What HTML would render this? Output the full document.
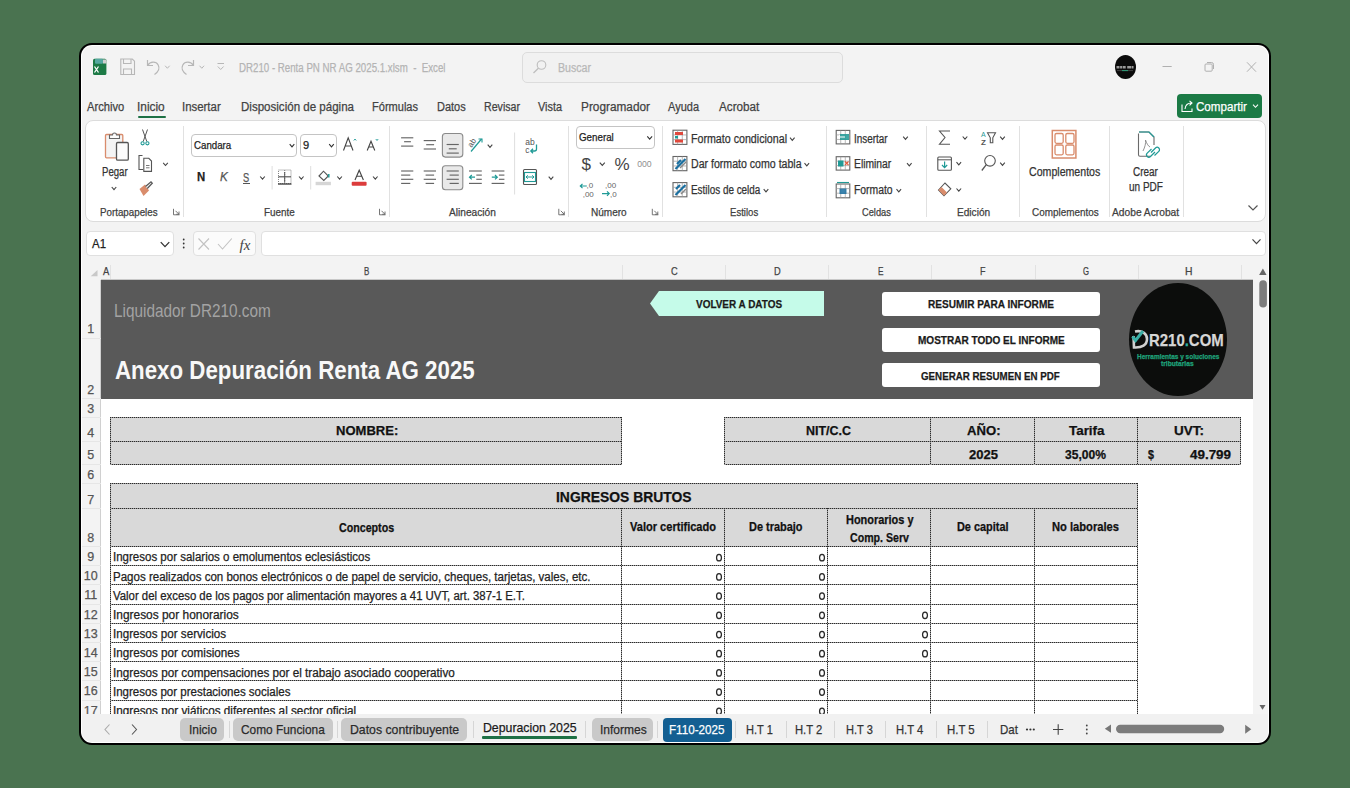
<!DOCTYPE html>
<html><head><meta charset="utf-8"><style>
html,body{margin:0;padding:0;}
body{width:1350px;height:788px;overflow:hidden;position:relative;background:#4a7350;font-family:"Liberation Sans", sans-serif;}
.a{position:absolute;box-sizing:border-box;}
.t{position:absolute;white-space:nowrap;transform-origin:0 0;-webkit-text-stroke:0.25px currentColor;}
</style></head><body>
<div class="a" style="left:79px;top:43px;width:1192px;height:702px;background:#000;border-radius:13px;"></div>
<div class="a" style="left:81px;top:45px;width:1188px;height:698px;background:#fff;border-radius:11px;"></div>
<div class="a" style="left:82px;top:46px;width:1186px;height:696px;background:#f3f3f3;border-radius:10px;"></div>
<div id="t0" class="t" style="transform:scaleX(0.8084);left:239px;top:61.84px;font-size:12px;line-height:12px;color:#b4b4b4;font-weight:400;">DR210 - Renta PN NR AG 2025.1.xlsm&nbsp; - &nbsp;Excel</div>
<div class="a" style="left:522px;top:52px;width:321px;height:31px;border:1px solid #dcdcdc;border-radius:5px;background:#f1f1f1;"></div>
<div id="t1" class="t" style="transform:scaleX(0.8833);left:558px;top:61.84px;font-size:12px;line-height:12px;color:#b8b8b8;font-weight:400;">Buscar</div>
<div id="t2" class="t" style="transform:scaleX(0.8948);left:86.7px;top:100.72px;font-size:12.5px;line-height:12.5px;color:#424242;font-weight:400;">Archivo</div>
<div id="t3" class="t" style="transform:scaleX(0.9490);left:137.3px;top:100.72px;font-size:12.5px;line-height:12.5px;color:#424242;font-weight:400;">Inicio</div>
<div id="t4" class="t" style="transform:scaleX(0.9129);left:182.3px;top:100.72px;font-size:12.5px;line-height:12.5px;color:#424242;font-weight:400;">Insertar</div>
<div id="t5" class="t" style="transform:scaleX(0.9239);left:240.7px;top:100.72px;font-size:12.5px;line-height:12.5px;color:#424242;font-weight:400;">Disposición de página</div>
<div id="t6" class="t" style="transform:scaleX(0.8830);left:372.3px;top:100.72px;font-size:12.5px;line-height:12.5px;color:#424242;font-weight:400;">Fórmulas</div>
<div id="t7" class="t" style="transform:scaleX(0.8789);left:437.3px;top:100.72px;font-size:12.5px;line-height:12.5px;color:#424242;font-weight:400;">Datos</div>
<div id="t8" class="t" style="transform:scaleX(0.8496);left:484.3px;top:100.72px;font-size:12.5px;line-height:12.5px;color:#424242;font-weight:400;">Revisar</div>
<div id="t9" class="t" style="transform:scaleX(0.8703);left:538.3px;top:100.72px;font-size:12.5px;line-height:12.5px;color:#424242;font-weight:400;">Vista</div>
<div id="t10" class="t" style="transform:scaleX(0.9458);left:581px;top:100.72px;font-size:12.5px;line-height:12.5px;color:#424242;font-weight:400;">Programador</div>
<div id="t11" class="t" style="transform:scaleX(0.8802);left:668.3px;top:100.72px;font-size:12.5px;line-height:12.5px;color:#424242;font-weight:400;">Ayuda</div>
<div id="t12" class="t" style="transform:scaleX(0.9352);left:719px;top:100.72px;font-size:12.5px;line-height:12.5px;color:#424242;font-weight:400;">Acrobat</div>
<div class="a" style="left:137.5px;top:115.5px;width:28.0px;height:2.5px;background:#1e7145;border-radius:1px;"></div>
<div class="a" style="left:1177px;top:94px;width:85px;height:24px;background:#1b7a45;border-radius:4px;"></div>
<div id="t13" class="t" style="transform:scaleX(0.9276);left:1195.8px;top:100.72px;font-size:12.5px;line-height:12.5px;color:#ffffff;font-weight:400;">Compartir</div>
<div class="a" style="left:1115px;top:55px;width:21px;height:24px;border-radius:50%;background:#0b0b0b;"></div>
<div class="a" style="left:84.5px;top:120px;width:1181.0px;height:102px;background:#ffffff;border:1px solid #dcdcdc;border-radius:8px;"></div>
<div id="t14" class="t" style="transform:scaleX(0.8885);left:100.1px;top:206.99px;font-size:11px;line-height:11px;color:#404040;font-weight:400;">Portapapeles</div>
<div id="t15" class="t" style="transform:scaleX(0.8993);left:264.4px;top:206.99px;font-size:11px;line-height:11px;color:#404040;font-weight:400;">Fuente</div>
<div id="t16" class="t" style="transform:scaleX(0.9239);left:448.5px;top:206.99px;font-size:11px;line-height:11px;color:#404040;font-weight:400;">Alineación</div>
<div id="t17" class="t" style="transform:scaleX(0.9125);left:590.8px;top:206.99px;font-size:11px;line-height:11px;color:#404040;font-weight:400;">Número</div>
<div id="t18" class="t" style="transform:scaleX(0.8702);left:729.9px;top:206.99px;font-size:11px;line-height:11px;color:#404040;font-weight:400;">Estilos</div>
<div id="t19" class="t" style="transform:scaleX(0.8409);left:861.9px;top:206.99px;font-size:11px;line-height:11px;color:#404040;font-weight:400;">Celdas</div>
<div id="t20" class="t" style="transform:scaleX(0.9175);left:956.8px;top:206.99px;font-size:11px;line-height:11px;color:#404040;font-weight:400;">Edición</div>
<div id="t21" class="t" style="transform:scaleX(0.9015);left:1031.6px;top:206.99px;font-size:11px;line-height:11px;color:#404040;font-weight:400;">Complementos</div>
<div id="t22" class="t" style="transform:scaleX(0.9297);left:1112.1px;top:206.99px;font-size:11px;line-height:11px;color:#404040;font-weight:400;">Adobe Acrobat</div>
<div class="a" style="left:183px;top:126px;width:1px;height:91px;background:#e1e1e1;"></div>
<div class="a" style="left:389.3px;top:126px;width:1.0px;height:91px;background:#e1e1e1;"></div>
<div class="a" style="left:568.4px;top:126px;width:1.0px;height:91px;background:#e1e1e1;"></div>
<div class="a" style="left:661.8px;top:126px;width:1.0px;height:91px;background:#e1e1e1;"></div>
<div class="a" style="left:825.9px;top:126px;width:1.0px;height:91px;background:#e1e1e1;"></div>
<div class="a" style="left:926.1px;top:126px;width:1.0px;height:91px;background:#e1e1e1;"></div>
<div class="a" style="left:1019.4px;top:126px;width:1.0px;height:91px;background:#e1e1e1;"></div>
<div class="a" style="left:1109.1px;top:126px;width:1.0px;height:91px;background:#e1e1e1;"></div>
<div class="a" style="left:1182.8px;top:126px;width:1.0px;height:91px;background:#e1e1e1;"></div>
<div id="t23" class="t" style="transform:scaleX(0.7992);left:101.8px;top:166.14px;font-size:12px;line-height:12px;color:#333;font-weight:400;">Pegar</div>
<div class="a" style="left:190.7px;top:133.5px;width:106.60000000000002px;height:23.69999999999999px;border:1px solid #c4c4c4;border-radius:4px;background:#fff;"></div>
<div id="t24" class="t" style="transform:scaleX(0.8431);left:193.8px;top:139.67px;font-size:11.5px;line-height:11.5px;color:#222;font-weight:400;">Candara</div>
<div class="a" style="left:300.4px;top:133.5px;width:36.80000000000001px;height:23.69999999999999px;border:1px solid #c4c4c4;border-radius:4px;background:#fff;"></div>
<div id="t25" class="t" style="transform:scaleX(0.9678);left:302.8px;top:139.67px;font-size:11.5px;line-height:11.5px;color:#222;font-weight:400;">9</div>
<div class="a" style="left:576.3px;top:125.8px;width:78.80000000000007px;height:23.000000000000014px;border:1px solid #c4c4c4;border-radius:4px;background:#fff;"></div>
<div id="t26" class="t" style="transform:scaleX(0.8891);left:578.8px;top:132.29px;font-size:11px;line-height:11px;color:#222;font-weight:400;">General</div>
<div id="t27" class="t" style="transform:scaleX(0.8884);left:690.7px;top:132.84px;font-size:12px;line-height:12px;color:#333;font-weight:400;">Formato condicional</div>
<div id="t28" class="t" style="transform:scaleX(0.8820);left:690.7px;top:158.14px;font-size:12px;line-height:12px;color:#333;font-weight:400;">Dar formato como tabla</div>
<div id="t29" class="t" style="transform:scaleX(0.8245);left:690.7px;top:184.34px;font-size:12px;line-height:12px;color:#333;font-weight:400;">Estilos de celda</div>
<div id="t30" class="t" style="transform:scaleX(0.8258);left:853.9px;top:132.84px;font-size:12px;line-height:12px;color:#333;font-weight:400;">Insertar</div>
<div id="t31" class="t" style="transform:scaleX(0.8606);left:853.9px;top:158.14px;font-size:12px;line-height:12px;color:#333;font-weight:400;">Eliminar</div>
<div id="t32" class="t" style="transform:scaleX(0.8638);left:853.9px;top:184.34px;font-size:12px;line-height:12px;color:#333;font-weight:400;">Formato</div>
<div id="t33" class="t" style="transform:scaleX(0.8835);left:1028.6px;top:165.74px;font-size:12px;line-height:12px;color:#333;font-weight:400;">Complementos</div>
<div id="t34" class="t" style="transform:scaleX(0.8296);left:1133.3px;top:165.74px;font-size:12px;line-height:12px;color:#333;font-weight:400;">Crear</div>
<div id="t35" class="t" style="transform:scaleX(0.8332);left:1128.8px;top:181.44px;font-size:12px;line-height:12px;color:#333;font-weight:400;">un PDF</div>
<div id="t36" class="t" style="transform:scaleX(0.9080);left:196.7px;top:171.12px;font-size:12.5px;line-height:12.5px;color:#222;font-weight:700;">N</div>
<div id="t37" class="t" style="transform:scaleX(0.9348);left:219.5px;top:171.12px;font-size:12.5px;line-height:12.5px;color:#555;font-weight:400;font-style:italic;">K</div>
<div id="t38" class="t" style="transform:scaleX(0.7735);left:243.3px;top:171.54px;font-size:12px;line-height:12px;color:#555;font-weight:400;">S</div>
<div class="a" style="left:243px;top:182.7px;width:7px;height:1.1000000000000227px;background:#555;"></div>
<div class="a" style="left:86px;top:230.5px;width:88px;height:25.5px;border:1px solid #e0e0e0;border-radius:4px;background:#fff;"></div>
<div id="t39" class="t" style="transform:scaleX(0.9532);left:92px;top:237.94px;font-size:12px;line-height:12px;color:#222;font-weight:400;">A1</div>
<div class="a" style="left:193px;top:230.5px;width:63px;height:25.5px;border:1px solid #e0e0e0;border-radius:4px;background:#fbfbfb;"></div>
<div class="a" style="left:261px;top:230.5px;width:1004.5px;height:25.5px;border:1px solid #e0e0e0;border-radius:4px;background:#fff;"></div>
<div class="a" style="left:101px;top:259px;width:1152px;height:21px;background:#f3f3f3;border-bottom:1px solid #c8c8c8;"></div>
<div class="a" style="left:110px;top:265px;width:1px;height:14px;background:#e2e2e2;"></div>
<div class="a" style="left:621.5px;top:265px;width:1.0px;height:14px;background:#e2e2e2;"></div>
<div class="a" style="left:724.5px;top:265px;width:1.0px;height:14px;background:#e2e2e2;"></div>
<div class="a" style="left:828px;top:265px;width:1px;height:14px;background:#e2e2e2;"></div>
<div class="a" style="left:931px;top:265px;width:1px;height:14px;background:#e2e2e2;"></div>
<div class="a" style="left:1034.5px;top:265px;width:1.0px;height:14px;background:#e2e2e2;"></div>
<div class="a" style="left:1137.5px;top:265px;width:1.0px;height:14px;background:#e2e2e2;"></div>
<div class="a" style="left:1241px;top:265px;width:1px;height:14px;background:#e2e2e2;"></div>
<div id="t40" class="t" style="transform:scaleX(0.8579);left:103px;top:266.29px;font-size:11px;line-height:11px;color:#444;font-weight:400;">A</div>
<div id="t41" class="t" style="transform:scaleX(0.7217);left:364px;top:266.29px;font-size:11px;line-height:11px;color:#444;font-weight:400;">B</div>
<div id="t42" class="t" style="transform:scaleX(0.8424);left:670.5px;top:266.29px;font-size:11px;line-height:11px;color:#444;font-weight:400;">C</div>
<div id="t43" class="t" style="transform:scaleX(0.8424);left:773.8px;top:266.29px;font-size:11px;line-height:11px;color:#444;font-weight:400;">D</div>
<div id="t44" class="t" style="transform:scaleX(0.7489);left:877.5px;top:266.29px;font-size:11px;line-height:11px;color:#444;font-weight:400;">E</div>
<div id="t45" class="t" style="transform:scaleX(0.8167);left:980px;top:266.29px;font-size:11px;line-height:11px;color:#444;font-weight:400;">F</div>
<div id="t46" class="t" style="transform:scaleX(0.7007);left:1082.5px;top:266.29px;font-size:11px;line-height:11px;color:#444;font-weight:400;">G</div>
<div id="t47" class="t" style="transform:scaleX(0.9430);left:1185px;top:266.29px;font-size:11px;line-height:11px;color:#444;font-weight:400;">H</div>
<div class="a" style="left:82px;top:280px;width:19px;height:434px;background:#f3f3f3;border-right:1px solid #d0d0d0;"></div>
<div class="a" style="left:101px;top:280px;width:1152px;height:434px;background:#fff;"></div>
<div class="a" style="left:101px;top:280.4px;width:1152px;height:118.30000000000001px;background:#595959;"></div>
<div id="t48" class="t" style="transform:scaleX(0.8244);left:114px;top:301.76px;font-size:18.6px;line-height:18.6px;color:#a3a3a3;font-weight:400;-webkit-text-stroke:0;">Liquidador DR210.com</div>
<div id="t49" class="t" style="transform:scaleX(0.8574);left:115.3px;top:357.29px;font-size:26px;line-height:26px;color:#f8f8f8;font-weight:700;-webkit-text-stroke:0;">Anexo Depuración Renta AG 2025</div>
<svg class="a" style="left:650px;top:291px" width="175" height="25"><polygon points="0,12.5 9,0 174,0 174,25 9,25" fill="#c5fbe9"/></svg>
<div id="t50" class="t" style="transform:scaleX(0.8656);left:696.4px;top:299.17px;font-size:11.5px;line-height:11.5px;color:#1a1a1a;font-weight:700;">VOLVER A DATOS</div>
<div class="a" style="left:882.2px;top:291.5px;width:217.79999999999995px;height:24.399999999999977px;background:#fff;border-radius:3px;"></div>
<div id="t51" class="t" style="transform:scaleX(0.8765);left:927.9px;top:299.17px;font-size:11.5px;line-height:11.5px;color:#1a1a1a;font-weight:700;">RESUMIR PARA INFORME</div>
<div class="a" style="left:882.2px;top:327.7px;width:217.79999999999995px;height:24.0px;background:#fff;border-radius:3px;"></div>
<div id="t52" class="t" style="transform:scaleX(0.8725);left:917.5px;top:335.37px;font-size:11.5px;line-height:11.5px;color:#1a1a1a;font-weight:700;">MOSTRAR TODO EL INFORME</div>
<div class="a" style="left:882.2px;top:363.4px;width:217.79999999999995px;height:23.600000000000023px;background:#fff;border-radius:3px;"></div>
<div id="t53" class="t" style="transform:scaleX(0.8479);left:921.3px;top:371.07px;font-size:11.5px;line-height:11.5px;color:#1a1a1a;font-weight:700;">GENERAR RESUMEN EN PDF</div>
<div class="a" style="left:1128.5px;top:282.7px;width:98px;height:113px;border-radius:50%;background:#0c0d0c;"></div>
<div id="t54" class="t" style="transform:scaleX(0.8783);left:1149.1px;top:332.01px;font-size:17px;line-height:17px;color:#d6d6d6;font-weight:700;">R210<span style="color:#2bb0a0">.</span>COM</div>
<div id="t55" class="t" style="transform:scaleX(0.9249);left:1136.7px;top:352.87px;font-size:7px;line-height:7px;color:#1fa27a;font-weight:700;">Herramientas y soluciones</div>
<div id="t56" class="t" style="transform:scaleX(0.9523);left:1161.2px;top:359.87px;font-size:7px;line-height:7px;color:#1fa27a;font-weight:700;">tributarias</div>
<svg class="a" style="left:1130px;top:328px" width="20" height="22" viewBox="0 0 20 22"><path d="M5 3.5 C12 2 17 5.5 17 11 C17 17 12 20 4 19.5 L3.5 8" stroke="#d0d0d0" stroke-width="2.6" fill="none"/><path d="M2.5 8.5 L5.5 12.5 L13 3" stroke="#3aaea6" stroke-width="3" fill="none"/></svg>
<div class="a" style="left:82px;top:337.5px;width:19px;height:1.0px;background:#e6e6e6;"></div>
<div class="t" style="left:70.8px;width:40px;text-align:center;top:323.22px;font-size:12.5px;line-height:12.5px;color:#555;">1</div>
<div class="a" style="left:82px;top:398.2px;width:19px;height:1.0px;background:#e6e6e6;"></div>
<div class="t" style="left:70.8px;width:40px;text-align:center;top:383.92px;font-size:12.5px;line-height:12.5px;color:#555;">2</div>
<div class="a" style="left:82px;top:417.2px;width:19px;height:1.0px;background:#e6e6e6;"></div>
<div class="t" style="left:70.8px;width:40px;text-align:center;top:402.92px;font-size:12.5px;line-height:12.5px;color:#555;">3</div>
<div class="a" style="left:82px;top:440.8px;width:19px;height:1.0px;background:#e6e6e6;"></div>
<div class="t" style="left:70.8px;width:40px;text-align:center;top:426.52px;font-size:12.5px;line-height:12.5px;color:#555;">4</div>
<div class="a" style="left:82px;top:463.5px;width:19px;height:1.0px;background:#e6e6e6;"></div>
<div class="t" style="left:70.8px;width:40px;text-align:center;top:449.22px;font-size:12.5px;line-height:12.5px;color:#555;">5</div>
<div class="a" style="left:82px;top:483.0px;width:19px;height:1.0px;background:#e6e6e6;"></div>
<div class="t" style="left:70.8px;width:40px;text-align:center;top:468.72px;font-size:12.5px;line-height:12.5px;color:#555;">6</div>
<div class="a" style="left:82px;top:507.8px;width:19px;height:1.0px;background:#e6e6e6;"></div>
<div class="t" style="left:70.8px;width:40px;text-align:center;top:493.52px;font-size:12.5px;line-height:12.5px;color:#555;">7</div>
<div class="a" style="left:82px;top:546.0px;width:19px;height:1.0px;background:#e6e6e6;"></div>
<div class="t" style="left:70.8px;width:40px;text-align:center;top:531.72px;font-size:12.5px;line-height:12.5px;color:#555;">8</div>
<div class="a" style="left:82px;top:565.2px;width:19px;height:1.0px;background:#e6e6e6;"></div>
<div class="t" style="left:70.8px;width:40px;text-align:center;top:550.92px;font-size:12.5px;line-height:12.5px;color:#555;">9</div>
<div class="a" style="left:82px;top:584.4000000000001px;width:19px;height:1.0px;background:#e6e6e6;"></div>
<div class="t" style="left:70.8px;width:40px;text-align:center;top:570.12px;font-size:12.5px;line-height:12.5px;color:#555;">10</div>
<div class="a" style="left:82px;top:603.6000000000001px;width:19px;height:1.0px;background:#e6e6e6;"></div>
<div class="t" style="left:70.8px;width:40px;text-align:center;top:589.32px;font-size:12.5px;line-height:12.5px;color:#555;">11</div>
<div class="a" style="left:82px;top:622.8000000000002px;width:19px;height:1.0px;background:#e6e6e6;"></div>
<div class="t" style="left:70.8px;width:40px;text-align:center;top:608.52px;font-size:12.5px;line-height:12.5px;color:#555;">12</div>
<div class="a" style="left:82px;top:642.0000000000002px;width:19px;height:1.0px;background:#e6e6e6;"></div>
<div class="t" style="left:70.8px;width:40px;text-align:center;top:627.72px;font-size:12.5px;line-height:12.5px;color:#555;">13</div>
<div class="a" style="left:82px;top:661.2000000000003px;width:19px;height:1.0px;background:#e6e6e6;"></div>
<div class="t" style="left:70.8px;width:40px;text-align:center;top:646.92px;font-size:12.5px;line-height:12.5px;color:#555;">14</div>
<div class="a" style="left:82px;top:680.4000000000003px;width:19px;height:1.0px;background:#e6e6e6;"></div>
<div class="t" style="left:70.8px;width:40px;text-align:center;top:666.12px;font-size:12.5px;line-height:12.5px;color:#555;">15</div>
<div class="a" style="left:82px;top:699.6000000000004px;width:19px;height:1.0px;background:#e6e6e6;"></div>
<div class="t" style="left:70.8px;width:40px;text-align:center;top:685.32px;font-size:12.5px;line-height:12.5px;color:#555;">16</div>
<div class="a" style="left:82px;top:718.8000000000004px;width:19px;height:1.0px;background:#e6e6e6;"></div>
<div class="t" style="left:70.8px;width:40px;text-align:center;top:704.52px;font-size:12.5px;line-height:12.5px;color:#555;">17</div>
<div class="a" style="left:110px;top:417px;width:512px;height:48px;background:#d9d9d9;"></div>
<div class="a" style="left:724px;top:417px;width:517px;height:48px;background:#d9d9d9;"></div>
<div class="a" style="left:110px;top:417px;width:512px;height:1px;background:repeating-linear-gradient(90deg,#2a2a2a 0 1px,#9a9a9a 1px 2px);"></div>
<div class="a" style="left:724px;top:417px;width:517px;height:1px;background:repeating-linear-gradient(90deg,#2a2a2a 0 1px,#9a9a9a 1px 2px);"></div>
<div class="a" style="left:110px;top:441px;width:512px;height:1px;background:repeating-linear-gradient(90deg,#2a2a2a 0 1px,#9a9a9a 1px 2px);"></div>
<div class="a" style="left:724px;top:441px;width:517px;height:1px;background:repeating-linear-gradient(90deg,#2a2a2a 0 1px,#9a9a9a 1px 2px);"></div>
<div class="a" style="left:110px;top:464px;width:512px;height:1px;background:repeating-linear-gradient(90deg,#2a2a2a 0 1px,#9a9a9a 1px 2px);"></div>
<div class="a" style="left:724px;top:464px;width:517px;height:1px;background:repeating-linear-gradient(90deg,#2a2a2a 0 1px,#9a9a9a 1px 2px);"></div>
<div class="a" style="left:110px;top:417px;width:1px;height:48px;background:repeating-linear-gradient(180deg,#2a2a2a 0 1px,#9a9a9a 1px 2px);"></div>
<div class="a" style="left:621px;top:417px;width:1px;height:48px;background:repeating-linear-gradient(180deg,#2a2a2a 0 1px,#9a9a9a 1px 2px);"></div>
<div class="a" style="left:724px;top:417px;width:1px;height:48px;background:repeating-linear-gradient(180deg,#2a2a2a 0 1px,#9a9a9a 1px 2px);"></div>
<div class="a" style="left:930px;top:417px;width:1px;height:48px;background:repeating-linear-gradient(180deg,#2a2a2a 0 1px,#9a9a9a 1px 2px);"></div>
<div class="a" style="left:1034px;top:417px;width:1px;height:48px;background:repeating-linear-gradient(180deg,#2a2a2a 0 1px,#9a9a9a 1px 2px);"></div>
<div class="a" style="left:1137px;top:417px;width:1px;height:48px;background:repeating-linear-gradient(180deg,#2a2a2a 0 1px,#9a9a9a 1px 2px);"></div>
<div class="a" style="left:1240px;top:417px;width:1px;height:48px;background:repeating-linear-gradient(180deg,#2a2a2a 0 1px,#9a9a9a 1px 2px);"></div>
<div id="t57" class="t" style="transform:scaleX(1.0031);left:335.6px;top:424.00px;font-size:13px;line-height:13px;color:#111;font-weight:700;">NOMBRE:</div>
<div id="t58" class="t" style="transform:scaleX(0.9584);left:806px;top:424.00px;font-size:13px;line-height:13px;color:#111;font-weight:700;">NIT/C.C</div>
<div id="t59" class="t" style="transform:scaleX(1.0085);left:966.5px;top:424.00px;font-size:13px;line-height:13px;color:#111;font-weight:700;">AÑO:</div>
<div id="t60" class="t" style="transform:scaleX(1.0309);left:1068.5px;top:424.00px;font-size:13px;line-height:13px;color:#111;font-weight:700;">Tarifa</div>
<div id="t61" class="t" style="transform:scaleX(1.0384);left:1174px;top:424.00px;font-size:13px;line-height:13px;color:#111;font-weight:700;">UVT:</div>
<div id="t62" class="t" style="transform:scaleX(1.0860);left:968.5px;top:448.84px;font-size:12px;line-height:12px;color:#111;font-weight:700;">2025</div>
<div id="t63" class="t" style="transform:scaleX(1.0073);left:1065px;top:448.84px;font-size:12px;line-height:12px;color:#111;font-weight:700;">35,00%</div>
<div id="t64" class="t" style="transform:scaleX(0.8972);left:1147.5px;top:448.84px;font-size:12px;line-height:12px;color:#111;font-weight:700;">$</div>
<div id="t65" class="t" style="transform:scaleX(1.1171);left:1190px;top:448.84px;font-size:12px;line-height:12px;color:#111;font-weight:700;">49.799</div>
<div class="a" style="left:110px;top:483px;width:1028px;height:63px;background:#d9d9d9;"></div>
<div class="a" style="left:110px;top:483px;width:1028px;height:1px;background:repeating-linear-gradient(90deg,#2a2a2a 0 1px,#9a9a9a 1px 2px);"></div>
<div class="a" style="left:110px;top:508px;width:1028px;height:1px;background:repeating-linear-gradient(90deg,#2a2a2a 0 1px,#9a9a9a 1px 2px);"></div>
<div class="a" style="left:110px;top:546px;width:1028px;height:1px;background:repeating-linear-gradient(90deg,#2a2a2a 0 1px,#9a9a9a 1px 2px);"></div>
<div class="a" style="left:110px;top:565px;width:1028px;height:1px;background:repeating-linear-gradient(90deg,#2a2a2a 0 1px,#9a9a9a 1px 2px);"></div>
<div class="a" style="left:110px;top:584px;width:1028px;height:1px;background:repeating-linear-gradient(90deg,#2a2a2a 0 1px,#9a9a9a 1px 2px);"></div>
<div class="a" style="left:110px;top:604px;width:1028px;height:1px;background:repeating-linear-gradient(90deg,#2a2a2a 0 1px,#9a9a9a 1px 2px);"></div>
<div class="a" style="left:110px;top:623px;width:1028px;height:1px;background:repeating-linear-gradient(90deg,#2a2a2a 0 1px,#9a9a9a 1px 2px);"></div>
<div class="a" style="left:110px;top:642px;width:1028px;height:1px;background:repeating-linear-gradient(90deg,#2a2a2a 0 1px,#9a9a9a 1px 2px);"></div>
<div class="a" style="left:110px;top:661px;width:1028px;height:1px;background:repeating-linear-gradient(90deg,#2a2a2a 0 1px,#9a9a9a 1px 2px);"></div>
<div class="a" style="left:110px;top:680px;width:1028px;height:1px;background:repeating-linear-gradient(90deg,#2a2a2a 0 1px,#9a9a9a 1px 2px);"></div>
<div class="a" style="left:110px;top:700px;width:1028px;height:1px;background:repeating-linear-gradient(90deg,#2a2a2a 0 1px,#9a9a9a 1px 2px);"></div>
<div class="a" style="left:110px;top:483px;width:1px;height:231px;background:repeating-linear-gradient(180deg,#2a2a2a 0 1px,#9a9a9a 1px 2px);"></div>
<div class="a" style="left:1137px;top:483px;width:1px;height:231px;background:repeating-linear-gradient(180deg,#2a2a2a 0 1px,#9a9a9a 1px 2px);"></div>
<div class="a" style="left:621px;top:508px;width:1px;height:206px;background:repeating-linear-gradient(180deg,#2a2a2a 0 1px,#9a9a9a 1px 2px);"></div>
<div class="a" style="left:724px;top:508px;width:1px;height:206px;background:repeating-linear-gradient(180deg,#2a2a2a 0 1px,#9a9a9a 1px 2px);"></div>
<div class="a" style="left:827px;top:508px;width:1px;height:206px;background:repeating-linear-gradient(180deg,#2a2a2a 0 1px,#9a9a9a 1px 2px);"></div>
<div class="a" style="left:930px;top:508px;width:1px;height:206px;background:repeating-linear-gradient(180deg,#2a2a2a 0 1px,#9a9a9a 1px 2px);"></div>
<div class="a" style="left:1034px;top:508px;width:1px;height:206px;background:repeating-linear-gradient(180deg,#2a2a2a 0 1px,#9a9a9a 1px 2px);"></div>
<div id="t66" class="t" style="transform:scaleX(0.9254);left:556px;top:488.80px;font-size:15px;line-height:15px;color:#111;font-weight:700;">INGRESOS BRUTOS</div>
<div id="t67" class="t" style="transform:scaleX(0.8885);left:338.6px;top:522.04px;font-size:12px;line-height:12px;color:#111;font-weight:700;">Conceptos</div>
<div id="t68" class="t" style="transform:scaleX(0.9210);left:630px;top:520.84px;font-size:12px;line-height:12px;color:#111;font-weight:700;">Valor certificado</div>
<div id="t69" class="t" style="transform:scaleX(0.9116);left:749px;top:520.84px;font-size:12px;line-height:12px;color:#111;font-weight:700;">De trabajo</div>
<div id="t70" class="t" style="transform:scaleX(0.9120);left:846px;top:513.84px;font-size:12px;line-height:12px;color:#111;font-weight:700;">Honorarios y</div>
<div id="t71" class="t" style="transform:scaleX(0.8847);left:850px;top:532.34px;font-size:12px;line-height:12px;color:#111;font-weight:700;">Comp. Serv</div>
<div id="t72" class="t" style="transform:scaleX(0.9082);left:956.5px;top:520.84px;font-size:12px;line-height:12px;color:#111;font-weight:700;">De capital</div>
<div id="t73" class="t" style="transform:scaleX(0.9302);left:1051.5px;top:520.84px;font-size:12px;line-height:12px;color:#111;font-weight:700;">No laborales</div>
<div id="t74" class="t" style="transform:scaleX(0.9593);left:113.2px;top:551.34px;font-size:12px;line-height:12px;color:#222;font-weight:400;">Ingresos por salarios o emolumentos eclesiásticos</div>
<svg class="a" style="left:0;top:0" width="1350" height="788"><ellipse cx="719" cy="557.70" rx="2.45" ry="3.25" stroke="#2a2a2a" stroke-width="1.25" fill="none"/><ellipse cx="822" cy="557.70" rx="2.45" ry="3.25" stroke="#2a2a2a" stroke-width="1.25" fill="none"/></svg>
<div id="t75" class="t" style="transform:scaleX(0.9608);left:113.2px;top:570.54px;font-size:12px;line-height:12px;color:#222;font-weight:400;">Pagos realizados con bonos electrónicos o de papel de servicio, cheques, tarjetas, vales, etc.</div>
<svg class="a" style="left:0;top:0" width="1350" height="788"><ellipse cx="719" cy="576.90" rx="2.45" ry="3.25" stroke="#2a2a2a" stroke-width="1.25" fill="none"/><ellipse cx="822" cy="576.90" rx="2.45" ry="3.25" stroke="#2a2a2a" stroke-width="1.25" fill="none"/></svg>
<div id="t76" class="t" style="transform:scaleX(0.9474);left:113.2px;top:589.74px;font-size:12px;line-height:12px;color:#222;font-weight:400;">Valor del exceso de los pagos por alimentación mayores a 41 UVT, art. 387-1 E.T.</div>
<svg class="a" style="left:0;top:0" width="1350" height="788"><ellipse cx="719" cy="596.10" rx="2.45" ry="3.25" stroke="#2a2a2a" stroke-width="1.25" fill="none"/><ellipse cx="822" cy="596.10" rx="2.45" ry="3.25" stroke="#2a2a2a" stroke-width="1.25" fill="none"/></svg>
<div id="t77" class="t" style="transform:scaleX(0.9925);left:113.2px;top:608.94px;font-size:12px;line-height:12px;color:#222;font-weight:400;">Ingresos por honorarios</div>
<svg class="a" style="left:0;top:0" width="1350" height="788"><ellipse cx="719" cy="615.30" rx="2.45" ry="3.25" stroke="#2a2a2a" stroke-width="1.25" fill="none"/><ellipse cx="822" cy="615.30" rx="2.45" ry="3.25" stroke="#2a2a2a" stroke-width="1.25" fill="none"/><ellipse cx="925" cy="615.30" rx="2.45" ry="3.25" stroke="#2a2a2a" stroke-width="1.25" fill="none"/></svg>
<div id="t78" class="t" style="transform:scaleX(0.9690);left:113.2px;top:628.14px;font-size:12px;line-height:12px;color:#222;font-weight:400;">Ingresos por servicios</div>
<svg class="a" style="left:0;top:0" width="1350" height="788"><ellipse cx="719" cy="634.50" rx="2.45" ry="3.25" stroke="#2a2a2a" stroke-width="1.25" fill="none"/><ellipse cx="822" cy="634.50" rx="2.45" ry="3.25" stroke="#2a2a2a" stroke-width="1.25" fill="none"/><ellipse cx="925" cy="634.50" rx="2.45" ry="3.25" stroke="#2a2a2a" stroke-width="1.25" fill="none"/></svg>
<div id="t79" class="t" style="transform:scaleX(0.9741);left:113.2px;top:647.34px;font-size:12px;line-height:12px;color:#222;font-weight:400;">Ingresos por comisiones</div>
<svg class="a" style="left:0;top:0" width="1350" height="788"><ellipse cx="719" cy="653.70" rx="2.45" ry="3.25" stroke="#2a2a2a" stroke-width="1.25" fill="none"/><ellipse cx="822" cy="653.70" rx="2.45" ry="3.25" stroke="#2a2a2a" stroke-width="1.25" fill="none"/><ellipse cx="925" cy="653.70" rx="2.45" ry="3.25" stroke="#2a2a2a" stroke-width="1.25" fill="none"/></svg>
<div id="t80" class="t" style="transform:scaleX(0.9760);left:113.2px;top:666.54px;font-size:12px;line-height:12px;color:#222;font-weight:400;">Ingresos por compensaciones por el trabajo asociado cooperativo</div>
<svg class="a" style="left:0;top:0" width="1350" height="788"><ellipse cx="719" cy="672.90" rx="2.45" ry="3.25" stroke="#2a2a2a" stroke-width="1.25" fill="none"/><ellipse cx="822" cy="672.90" rx="2.45" ry="3.25" stroke="#2a2a2a" stroke-width="1.25" fill="none"/></svg>
<div id="t81" class="t" style="transform:scaleX(0.9607);left:113.2px;top:685.74px;font-size:12px;line-height:12px;color:#222;font-weight:400;">Ingresos por prestaciones sociales</div>
<svg class="a" style="left:0;top:0" width="1350" height="788"><ellipse cx="719" cy="692.10" rx="2.45" ry="3.25" stroke="#2a2a2a" stroke-width="1.25" fill="none"/><ellipse cx="822" cy="692.10" rx="2.45" ry="3.25" stroke="#2a2a2a" stroke-width="1.25" fill="none"/></svg>
<div id="t82" class="t" style="transform:scaleX(0.9775);left:113.2px;top:704.94px;font-size:12px;line-height:12px;color:#222;font-weight:400;">Ingresos por viáticos diferentes al sector oficial</div>
<svg class="a" style="left:0;top:0" width="1350" height="788"><ellipse cx="719" cy="711.30" rx="2.45" ry="3.25" stroke="#2a2a2a" stroke-width="1.25" fill="none"/><ellipse cx="822" cy="711.30" rx="2.45" ry="3.25" stroke="#2a2a2a" stroke-width="1.25" fill="none"/></svg>
<div class="a" style="left:82px;top:714px;width:1186px;height:28px;background:#f1f1f1;border-radius:0 0 10px 10px;"></div>
<div class="a" style="left:180.2px;top:717.8px;width:44.20000000000002px;height:23.40000000000009px;background:#c9c9c9;border-radius:5px;"></div>
<div id="t83" class="t" style="transform:scaleX(0.8853);left:188.6px;top:723.37px;font-size:13.5px;line-height:13.5px;color:#2a2a2a;font-weight:400;">Inicio</div>
<div class="a" style="left:232.7px;top:717.8px;width:100.30000000000001px;height:23.40000000000009px;background:#c9c9c9;border-radius:5px;"></div>
<div id="t84" class="t" style="transform:scaleX(0.8792);left:240.7px;top:723.37px;font-size:13.5px;line-height:13.5px;color:#2a2a2a;font-weight:400;">Como Funciona</div>
<div class="a" style="left:341px;top:717.8px;width:126.19999999999999px;height:23.40000000000009px;background:#c9c9c9;border-radius:5px;"></div>
<div id="t85" class="t" style="transform:scaleX(0.9094);left:350px;top:723.37px;font-size:13.5px;line-height:13.5px;color:#2a2a2a;font-weight:400;">Datos contribuyente</div>
<div class="a" style="left:591.6px;top:717.8px;width:61.5px;height:23.40000000000009px;background:#c9c9c9;border-radius:5px;"></div>
<div id="t86" class="t" style="transform:scaleX(0.8909);left:599.6px;top:723.37px;font-size:13.5px;line-height:13.5px;color:#2a2a2a;font-weight:400;">Informes</div>
<div id="t87" class="t" style="transform:scaleX(0.9103);left:482.8px;top:721.07px;font-size:13.5px;line-height:13.5px;color:#1a1a1a;font-weight:400;">Depuracion 2025</div>
<div class="a" style="left:481.5px;top:736px;width:95.79999999999995px;height:2.5px;background:#1e7145;border-radius:1px;"></div>
<div class="a" style="left:662.6px;top:718.2px;width:69.10000000000002px;height:23.5px;background:#135f92;border-radius:4px;"></div>
<div id="t88" class="t" style="transform:scaleX(0.8632);left:669.2px;top:723.37px;font-size:13.5px;line-height:13.5px;color:#ffffff;font-weight:400;">F110-2025</div>
<div id="t89" class="t" style="transform:scaleX(0.8179);left:745.8px;top:723.37px;font-size:13.5px;line-height:13.5px;color:#333;font-weight:400;">H.T 1</div>
<div id="t90" class="t" style="transform:scaleX(0.8332);left:795.2px;top:723.37px;font-size:13.5px;line-height:13.5px;color:#333;font-weight:400;">H.T 2</div>
<div id="t91" class="t" style="transform:scaleX(0.8179);left:846px;top:723.37px;font-size:13.5px;line-height:13.5px;color:#333;font-weight:400;">H.T 3</div>
<div id="t92" class="t" style="transform:scaleX(0.8332);left:896.3px;top:723.37px;font-size:13.5px;line-height:13.5px;color:#333;font-weight:400;">H.T 4</div>
<div id="t93" class="t" style="transform:scaleX(0.8454);left:947.2px;top:723.37px;font-size:13.5px;line-height:13.5px;color:#333;font-weight:400;">H.T 5</div>
<div id="t94" class="t" style="transform:scaleX(0.8517);left:999.8px;top:723.37px;font-size:13.5px;line-height:13.5px;color:#333;font-weight:400;">Dat</div>
<div class="a" style="left:228.5px;top:721px;width:1.0px;height:17px;background:#d6d6d6;"></div>
<div class="a" style="left:337px;top:721px;width:1px;height:17px;background:#d6d6d6;"></div>
<div class="a" style="left:473px;top:721px;width:1px;height:17px;background:#d6d6d6;"></div>
<div class="a" style="left:585px;top:721px;width:1px;height:17px;background:#d6d6d6;"></div>
<div class="a" style="left:657px;top:721px;width:1px;height:17px;background:#d6d6d6;"></div>
<div class="a" style="left:735px;top:721px;width:1px;height:17px;background:#d6d6d6;"></div>
<div class="a" style="left:785.8px;top:721px;width:1.0px;height:17px;background:#d6d6d6;"></div>
<div class="a" style="left:833.8px;top:721px;width:1.0px;height:17px;background:#d6d6d6;"></div>
<div class="a" style="left:884.6px;top:721px;width:1.0px;height:17px;background:#d6d6d6;"></div>
<div class="a" style="left:936.3px;top:721px;width:1.0px;height:17px;background:#d6d6d6;"></div>
<div class="a" style="left:987.1px;top:721px;width:1.0px;height:17px;background:#d6d6d6;"></div>
<svg class="a" style="left:0;top:0" width="1350" height="788" viewBox="0 0 1350 788"><rect x="93" y="58.7" width="13.4" height="16.3" rx="1.5" fill="#1d7a46"/><rect x="95" y="58.7" width="8" height="5" rx="1" fill="#56a8a0"/><rect x="103" y="59.5" width="3.5" height="4" fill="#cfcfcf"/><path d="M94.5 66.5 L98.5 72.5 M98.5 66.5 L94.5 72.5" stroke="#fff" stroke-width="1.3"/><path d="M120.8 59 h11.5 l2.2 2.2 v13.3 h-13.7 z" stroke="#b7b7b7" stroke-width="1.1" fill="none"/><path d="M123.5 59 v4.5 h7.5 v-4.5 M123.5 74.5 v-5.5 h8 v5.5" stroke="#b7b7b7" stroke-width="1.1" fill="none"/><path d="M147.5 60 v5.5 h5.5 M147.8 65.2 C150 61.5 156 61 158.2 65 C160 68.5 158 72 154.5 74.5" stroke="#b7b7b7" stroke-width="1.2" fill="none"/><path d="M165.15 65.75 L167.4 68.25 L169.65 65.75" stroke="#b7b7b7" stroke-width="1" fill="none"/><path d="M193.5 60 v5.5 h-5.5 M193.2 65.2 C191 61.5 185 61 182.8 65 C181 68.5 183 72 186.5 74.5" stroke="#b7b7b7" stroke-width="1.2" fill="none"/><path d="M199.55 65.75 L201.8 68.25 L204.05 65.75" stroke="#b7b7b7" stroke-width="1" fill="none"/><path d="M217.5 63.5 h6.5 M217.8 66.5 L220.7 69.5 L223.6 66.5" stroke="#b7b7b7" stroke-width="1" fill="none"/><circle cx="541.5" cy="65" r="4.3" stroke="#bdbdbd" stroke-width="1.1" fill="none"/><path d="M538.4 68.2 L533.5 73" stroke="#bdbdbd" stroke-width="1.2"/><path d="M1162.5 66.5 h9.2" stroke="#b0b0b0" stroke-width="1"/><rect x="1205" y="64" width="7.2" height="7.2" rx="1" stroke="#b0b0b0" stroke-width="1" fill="none"/><path d="M1207 62.5 h4.5 a2 2 0 0 1 2 2 v4.5" stroke="#b0b0b0" stroke-width="1" fill="none"/><path d="M1247 62.3 L1256 71.7 M1256 62.3 L1247 71.7" stroke="#b0b0b0" stroke-width="1"/><path d="M1116.5 67.3 h17" stroke="#9a9a9a" stroke-width="2.4" stroke-dasharray="3 0.6 2 0.6 3 1.5 4 0.5"/><path d="M1117 70.6 h16" stroke="#666" stroke-width="0.6"/><path d="M1122 70.6 h6" stroke="#2f9f7a" stroke-width="1"/><path d="M1182 104.5 v7 h10 v-3" stroke="#fff" stroke-width="1.1" fill="none"/><path d="M1185 109 C1185.5 104.5 1188 103 1191.5 103 M1189.5 100.8 L1192 103 L1189.5 105.3" stroke="#fff" stroke-width="1.1" fill="none"/><path d="M1253.0 104.7 L1255.5 107.3 L1258.0 104.7" stroke="#fff" stroke-width="1.1" fill="none"/><rect x="105.5" y="134.5" width="17.3" height="23.3" rx="1" stroke="#d98c6c" stroke-width="1.3" fill="#f4f4f4"/><path d="M109.5 138.5 v-3.5 h3 a2 2 0 0 1 4 0 h3 v3.5 z" stroke="#666" stroke-width="1.1" fill="#fcfcfc"/><rect x="116.5" y="142.5" width="11.8" height="17.6" rx="1.2" stroke="#555" stroke-width="1.3" fill="#fcfcfc"/><path d="M111.75 187.0 L114 189.60000000000002 L116.25 187.0" stroke="#444" stroke-width="1.1" fill="none"/><path d="M142.5 129.5 L146.8 141.5 M147.5 129.5 L143.2 141.5" stroke="#555" stroke-width="1"/><circle cx="142.6" cy="143.3" r="1.6" stroke="#1f9a96" stroke-width="1.1" fill="none"/><circle cx="147.4" cy="143.3" r="1.6" stroke="#1f9a96" stroke-width="1.1" fill="none"/><path d="M142.5 155.5 h-3.5 v14 h4" stroke="#555" stroke-width="1.1" fill="none"/><path d="M143.8 158.3 h5 l2.7 2.7 v10.4 h-7.7 z" stroke="#555" stroke-width="1.1" fill="none"/><path d="M146 165.5 h3.5 M146 167.8 h3.5" stroke="#555" stroke-width="0.8"/><path d="M163.2 162.89999999999998 L165.5 165.5 L167.8 162.89999999999998" stroke="#444" stroke-width="1.1" fill="none"/><path d="M139.5 189 L145 184.5 L149 190.5 L143.5 196 z" fill="#d98c6c"/><path d="M145.5 186.5 L151 181.8 L152.3 183.2 L147.3 188.5" stroke="#555" stroke-width="1.2" fill="#eee"/><path d="M173.5 208.8 h6 v6 h-6 z" stroke="none" fill="none"/><path d="M173.5 208.8 v6 h6" stroke="#666" stroke-width="0.9" fill="none"/><path d="M175.5 210.8 L179.0 214.3 M179.0 211.5 v2.8 h-2.8" stroke="#666" stroke-width="0.9" fill="none"/><path d="M379.5 208.8 h6 v6 h-6 z" stroke="none" fill="none"/><path d="M379.5 208.8 v6 h6" stroke="#666" stroke-width="0.9" fill="none"/><path d="M381.5 210.8 L385.0 214.3 M385.0 211.5 v2.8 h-2.8" stroke="#666" stroke-width="0.9" fill="none"/><path d="M558.8 208.8 h6 v6 h-6 z" stroke="none" fill="none"/><path d="M558.8 208.8 v6 h6" stroke="#666" stroke-width="0.9" fill="none"/><path d="M560.8 210.8 L564.3 214.3 M564.3 211.5 v2.8 h-2.8" stroke="#666" stroke-width="0.9" fill="none"/><path d="M652.3 208.8 h6 v6 h-6 z" stroke="none" fill="none"/><path d="M652.3 208.8 v6 h6" stroke="#666" stroke-width="0.9" fill="none"/><path d="M654.3 210.8 L657.8 214.3 M657.8 211.5 v2.8 h-2.8" stroke="#666" stroke-width="0.9" fill="none"/><path d="M289.7 144.2 L292 146.8 L294.3 144.2" stroke="#333" stroke-width="1.1" fill="none"/><path d="M329.2 144.2 L331.5 146.8 L333.8 144.2" stroke="#333" stroke-width="1.1" fill="none"/><path d="M343.5 150.5 L348.2 137.8 L353 150.5 M345.3 146 h5.8" stroke="#444" stroke-width="1.1" fill="none"/><path d="M353.8 140.5 L355 139 L356.2 140.5" stroke="#1f9a96" stroke-width="0.9" fill="none"/><path d="M367.2 150.5 L371 141.2 L374.8 150.5 M368.6 147 h4.8" stroke="#444" stroke-width="1.1" fill="none"/><path d="M375.8 139 L377 140.5 L378.2 139" stroke="#1f9a96" stroke-width="0.9" fill="none"/><path d="M260.2 176.5 L262.5 179.10000000000002 L264.8 176.5" stroke="#444" stroke-width="1.1" fill="none"/><path d="M299.0 176.5 L301.3 179.10000000000002 L303.6 176.5" stroke="#444" stroke-width="1.1" fill="none"/><path d="M337.3 176.5 L339.6 179.10000000000002 L341.90000000000003 176.5" stroke="#444" stroke-width="1.1" fill="none"/><path d="M373.0 176.5 L375.3 179.10000000000002 L377.6 176.5" stroke="#444" stroke-width="1.1" fill="none"/><path d="M272.1 166 v23.5" stroke="#dedede" stroke-width="1"/><path d="M310.7 166 v23.5" stroke="#dedede" stroke-width="1"/><path d="M278.5 170 h12.5 v13.5 h-12.5 z M284.7 170 v13.5 M278.5 176.8 h12.5" stroke="#777" stroke-width="0.9" stroke-dasharray="1 1" fill="none"/><path d="M278.5 176.8 h12.5 M284.7 172 v10" stroke="#555" stroke-width="1" fill="none"/><path d="M278 184 h13.5" stroke="#444" stroke-width="1.4"/><path d="M319 176 L323.5 171.2 L328.3 176 L323.8 180.5 z" stroke="#555" stroke-width="1.1" fill="none"/><path d="M328.8 174 v3.5" stroke="#1f9a96" stroke-width="1.5"/><rect x="315.6" y="181.8" width="15.3" height="3.4" fill="#d6d6d6"/><path d="M355 180 L359.2 170.2 L363.4 180 M356.6 176.3 h5.2" stroke="#444" stroke-width="1.1" fill="none"/><rect x="351.7" y="181.8" width="14.9" height="4" rx="1" fill="#dc3c3c"/><path d="M401.1 137.8 h12.2" stroke="#666" stroke-width="1.15"/><path d="M404.1 141.7 h6.800000000000001" stroke="#666" stroke-width="1.15"/><path d="M401.1 146.1 h12.2" stroke="#666" stroke-width="1.15"/><path d="M423.7 140.6 h12.3" stroke="#666" stroke-width="1.15"/><path d="M426.2 144.7 h7.9" stroke="#666" stroke-width="1.15"/><path d="M423.7 149 h12.3" stroke="#666" stroke-width="1.15"/><rect x="442.4" y="133.5" width="20.4" height="23.6" rx="3" stroke="#8a8a8a" stroke-width="1.1" fill="#e9e9e9"/><path d="M446.6 144.5 h12.2" stroke="#666" stroke-width="1.15"/><path d="M448.8 148.8 h7.8999999999999995" stroke="#666" stroke-width="1.15"/><path d="M446.6 153.1 h12.2" stroke="#666" stroke-width="1.15"/><path d="M471 151.5 L481.5 139" stroke="#1f9a96" stroke-width="1.2"/><path d="M478.5 139 h3.5 v3.5" stroke="#1f9a96" stroke-width="1.1" fill="none"/><text x="0" y="0" transform="translate(471.5 148) rotate(-55)" font-family="Liberation Sans" font-size="8" fill="#555">ab</text><path d="M487.7 144.7 L490 147.3 L492.3 144.7" stroke="#444" stroke-width="1.1" fill="none"/><path d="M401.1 171 h12.2" stroke="#666" stroke-width="1.15"/><path d="M401.1 175.1 h9.2" stroke="#666" stroke-width="1.15"/><path d="M401.1 179.3 h12.2" stroke="#666" stroke-width="1.15"/><path d="M401.1 183.4 h9.2" stroke="#666" stroke-width="1.15"/><path d="M423.7 171 h12.3" stroke="#666" stroke-width="1.15"/><path d="M425.59999999999997 175.1 h8.5" stroke="#666" stroke-width="1.15"/><path d="M423.7 179.3 h12.3" stroke="#666" stroke-width="1.15"/><path d="M425.59999999999997 183.4 h8.5" stroke="#666" stroke-width="1.15"/><rect x="442.4" y="165.7" width="20.4" height="24" rx="3" stroke="#8a8a8a" stroke-width="1.1" fill="#e9e9e9"/><path d="M446.6 171 h12.2" stroke="#666" stroke-width="1.15"/><path d="M449.6 175.1 h9.2" stroke="#666" stroke-width="1.15"/><path d="M446.6 179.3 h12.2" stroke="#666" stroke-width="1.15"/><path d="M449.6 183.4 h9.2" stroke="#666" stroke-width="1.15"/><path d="M469 171 h12.8" stroke="#666" stroke-width="1.15"/><path d="M476.3 175.1 h5.500000000000001" stroke="#666" stroke-width="1.15"/><path d="M476.3 179.3 h5.500000000000001" stroke="#666" stroke-width="1.15"/><path d="M469 183.4 h12.8" stroke="#666" stroke-width="1.15"/><path d="M475 177.2 h-5.5 M471.8 175 L469.5 177.2 L471.8 179.4" stroke="#1f9a96" stroke-width="1.2" fill="none"/><path d="M491.6 171 h12.8" stroke="#666" stroke-width="1.15"/><path d="M498.90000000000003 175.1 h5.500000000000001" stroke="#666" stroke-width="1.15"/><path d="M498.90000000000003 179.3 h5.500000000000001" stroke="#666" stroke-width="1.15"/><path d="M491.6 183.4 h12.8" stroke="#666" stroke-width="1.15"/><path d="M491.8 177.2 h5.5 M495 175 L497.3 177.2 L495 179.4" stroke="#1f9a96" stroke-width="1.2" fill="none"/><path d="M514.6 132.5 v62" stroke="#dedede" stroke-width="1"/><text x="525.3" y="145.2" font-family="Liberation Sans" font-size="8.5" fill="#555">ab</text><text x="525.3" y="152.6" font-family="Liberation Sans" font-size="8.5" fill="#555">c</text><path d="M536.5 144.5 v4.5 a2 2 0 0 1 -2 2 h-3.5 M533 148.7 L530.8 151 L533 153.2" stroke="#1f9a96" stroke-width="1.3" fill="none"/><rect x="523.5" y="169.5" width="13" height="15" rx="1" stroke="#555" stroke-width="1.1" fill="none"/><rect x="524.5" y="172.5" width="11" height="9" stroke="#1f9a96" stroke-width="1.1" fill="none"/><path d="M526 177 h8 M527.8 175.3 L526 177 L527.8 178.7 M532.2 175.3 L534 177 L532.2 178.7" stroke="#1f9a96" stroke-width="1" fill="none"/><path d="M548.7 176.7 L551 179.3 L553.3 176.7" stroke="#444" stroke-width="1.1" fill="none"/><path d="M647.3000000000001 136.4 L649.7 139.20000000000002 L652.1 136.4" stroke="#333" stroke-width="1.1" fill="none"/><path d="M599.8 162.6 L602.3 165.4 L604.8 162.6" stroke="#444" stroke-width="1.1" fill="none"/><text x="581.5" y="169.5" font-family="Liberation Sans" font-size="17" fill="#444">$</text><text x="614.5" y="170" font-family="Liberation Sans" font-size="17" fill="#444">%</text><text x="637.2" y="166.7" font-family="Liberation Sans" font-size="9" fill="#8f8f8f" textLength="14.5" lengthAdjust="spacingAndGlyphs">000</text><text x="586.5" y="188" font-family="Liberation Sans" font-size="8" fill="#666">,0</text><text x="582.7" y="196.6" font-family="Liberation Sans" font-size="8" fill="#666">,00</text><path d="M586.8 186 h-6.5 M582.5 183.8 L580.3 186 L582.5 188.2" stroke="#1f9a96" stroke-width="1.2" fill="none"/><text x="605" y="188" font-family="Liberation Sans" font-size="8" fill="#666">,00</text><text x="610" y="196.6" font-family="Liberation Sans" font-size="8" fill="#666">,0</text><path d="M602 193.6 h7 M607 191.4 L609.2 193.6 L607 195.8" stroke="#1f9a96" stroke-width="1.2" fill="none"/><rect x="673" y="130.2" width="13.9" height="14.2" stroke="#666" stroke-width="1.1" fill="#fff"/><path d="M677.6333333333333 130.2 v14.2 M673 134.9333333333333 h13.9" stroke="#9a9a9a" stroke-width="0.7"/><path d="M682.2666666666667 130.2 v14.2 M673 139.66666666666666 h13.9" stroke="#9a9a9a" stroke-width="0.7"/><rect x="675" y="132" width="8" height="3" fill="#e0483c"/><rect x="675" y="139.5" width="8" height="3" fill="#e0483c"/><rect x="675" y="136" width="3" height="2.5" fill="#1f9a96"/><rect x="673" y="156.5" width="13.9" height="14.2" stroke="#666" stroke-width="1.1" fill="#fff"/><path d="M677.6333333333333 156.5 v14.2 M673 161.23333333333332 h13.9" stroke="#9a9a9a" stroke-width="0.7"/><path d="M682.2666666666667 156.5 v14.2 M673 165.96666666666667 h13.9" stroke="#9a9a9a" stroke-width="0.7"/><path d="M675.5 169 L685.5 159 M677 164 L681 160" stroke="#1a6fa0" stroke-width="2.2"/><path d="M680 168 L686 162" stroke="#888" stroke-width="1.5"/><rect x="673" y="182.6" width="13.9" height="14.2" stroke="#666" stroke-width="1.1" fill="#fff"/><path d="M677.6333333333333 182.6 v14.2 M673 187.33333333333331 h13.9" stroke="#9a9a9a" stroke-width="0.7"/><path d="M682.2666666666667 182.6 v14.2 M673 192.06666666666666 h13.9" stroke="#9a9a9a" stroke-width="0.7"/><path d="M675.5 195 L685.5 185 M676 189 L680 185" stroke="#1a6fa0" stroke-width="2.2"/><path d="M681 194 L686 189" stroke="#888" stroke-width="1.5"/><path d="M790.0 137.7 L792.3 140.3 L794.5999999999999 137.7" stroke="#444" stroke-width="1.1" fill="none"/><path d="M804.5 163.2 L806.8 165.8 L809.0999999999999 163.2" stroke="#444" stroke-width="1.1" fill="none"/><path d="M763.7 189.2 L766 191.8 L768.3 189.2" stroke="#444" stroke-width="1.1" fill="none"/><path d="M903.2 136.7 L905.5 139.3 L907.8 136.7" stroke="#444" stroke-width="1.1" fill="none"/><path d="M907.0 163.2 L909.3 165.8 L911.5999999999999 163.2" stroke="#444" stroke-width="1.1" fill="none"/><path d="M896.5 189.2 L898.8 191.8 L901.0999999999999 189.2" stroke="#444" stroke-width="1.1" fill="none"/><rect x="836.2" y="130.4" width="13.6" height="13.5" stroke="#666" stroke-width="1.1" fill="#fff"/><path d="M840.7333333333333 130.4 v13.5 M836.2 134.9 h13.6" stroke="#9a9a9a" stroke-width="0.7"/><path d="M845.2666666666668 130.4 v13.5 M836.2 139.4 h13.6" stroke="#9a9a9a" stroke-width="0.7"/><rect x="840" y="134" width="9" height="6" fill="#1f9a96" opacity="0.85"/><path d="M845 137 h-7 M840 135 L838 137 L840 139" stroke="#fff" stroke-width="1" fill="none"/><rect x="836.2" y="156.7" width="13.6" height="13.4" stroke="#666" stroke-width="1.1" fill="#fff"/><path d="M840.7333333333333 156.7 v13.4 M836.2 161.16666666666666 h13.6" stroke="#9a9a9a" stroke-width="0.7"/><path d="M845.2666666666668 156.7 v13.4 M836.2 165.63333333333333 h13.6" stroke="#9a9a9a" stroke-width="0.7"/><rect x="838" y="160.5" width="5.5" height="6" fill="#1f9a96"/><path d="M845 161.5 L848.5 165 M848.5 161.5 L845 165" stroke="#e25a3c" stroke-width="1.1"/><rect x="836.2" y="184" width="13.6" height="13.8" stroke="#666" stroke-width="1.1" fill="#fff"/><path d="M840.7333333333333 184 v13.8 M836.2 188.6 h13.6" stroke="#9a9a9a" stroke-width="0.7"/><path d="M845.2666666666668 184 v13.8 M836.2 193.2 h13.6" stroke="#9a9a9a" stroke-width="0.7"/><path d="M837 182.5 h12" stroke="#1f9a96" stroke-width="1.1"/><rect x="839.5" y="188.5" width="7" height="5.5" fill="#1a6fa0" opacity="0.85"/><path d="M950 131 h-10.5 L945 137.5 L939.5 144.2 h10.5" stroke="#555" stroke-width="1.1" fill="none"/><path d="M962.7 136.5 L965 139.10000000000002 L967.3 136.5" stroke="#444" stroke-width="1.1" fill="none"/><text x="981" y="137" font-family="Liberation Sans" font-size="7" fill="#1f9a96">A</text><text x="981" y="145.2" font-family="Liberation Sans" font-size="8" font-weight="bold" fill="#555">Z</text><path d="M987.5 132.8 h8 L992.8 137.8 v5 h-2.5 v-5 z" stroke="#555" stroke-width="1.1" fill="none"/><path d="M1000.2 136.7 L1002.5 139.3 L1004.8 136.7" stroke="#444" stroke-width="1.1" fill="none"/><rect x="937.8" y="157" width="13.6" height="13.3" rx="1" stroke="#555" stroke-width="1.1" fill="none"/><path d="M937.8 159.8 h13.6" stroke="#555" stroke-width="1"/><path d="M944.6 161.5 v6 M942 165 L944.6 167.7 L947.2 165" stroke="#1f9a96" stroke-width="1.2" fill="none"/><path d="M956.5 162.2 L958.8 164.8 L961.0999999999999 162.2" stroke="#444" stroke-width="1.1" fill="none"/><circle cx="990" cy="160.8" r="5.3" stroke="#555" stroke-width="1.1" fill="none"/><path d="M986.3 164.6 L981.8 170.5" stroke="#555" stroke-width="1.3"/><path d="M1000.2 162.7 L1002.5 165.3 L1004.8 162.7" stroke="#444" stroke-width="1.1" fill="none"/><path d="M938.5 190 L945 183 L950.8 188.8 L944 195.8 z" stroke="#555" stroke-width="1.1" fill="none"/><path d="M938.5 190 L941.5 187 L947 192.5 L944 195.8 z" fill="#d98c6c"/><path d="M956.5 188.5 L958.8 191.10000000000002 L961.0999999999999 188.5" stroke="#444" stroke-width="1.1" fill="none"/><rect x="1052.3" y="130.5" width="23.6" height="27.5" stroke="#d98c6c" stroke-width="1.5" fill="#fff"/><rect x="1055" y="133.5" width="8.2" height="9.8" rx="1.5" stroke="#d98c6c" stroke-width="1.3" fill="#fff"/><rect x="1065.8" y="133.5" width="8.2" height="9.8" rx="1.5" stroke="#d98c6c" stroke-width="1.3" fill="#fff"/><rect x="1055" y="145" width="8.2" height="9.8" rx="1.5" stroke="#d98c6c" stroke-width="1.3" fill="#fff"/><rect x="1065.8" y="145" width="8.2" height="9.8" rx="1.5" stroke="#d98c6c" stroke-width="1.3" fill="#fff"/><path d="M1139 132 h10 l5 5 v8 M1150.5 156.3 h-10.5 a1.5 1.5 0 0 1 -1.5 -1.5 v-21.3" stroke="#6a6a6a" stroke-width="1.1" fill="none"/><path d="M1139 132 h10 l5 5" stroke="#1f9a96" stroke-width="1.1" fill="none"/><path d="M1143 151 C1145 147 1146 143 1145.5 140 C1146.5 143 1148 146 1150 147" stroke="#888" stroke-width="0.9" fill="none"/><path d="M1151 152.5 L1155.5 148 a2.3 2.3 0 0 1 3.3 3.3 L1154.5 155.5 M1155 152 L1150.5 156.5 a2.3 2.3 0 0 1 -3.3 -3.3 L1151.5 149" stroke="#1f9a96" stroke-width="1.2" fill="none"/><path d="M1248.5 205.5 L1253 210 L1257.5 205.5" stroke="#555" stroke-width="1.2" fill="none"/><path d="M160.75 242.15 L165 246.65 L169.25 242.15" stroke="#333" stroke-width="1.3" fill="none"/><circle cx="183.7" cy="239.5" r="0.9" fill="#333"/><circle cx="183.7" cy="243.5" r="0.9" fill="#333"/><circle cx="183.7" cy="247.5" r="0.9" fill="#333"/><path d="M198.5 238.5 L209 249.5 M209 238.5 L198.5 249.5" stroke="#c2c2c2" stroke-width="1.1"/><path d="M218 244 L222.5 249 L231.8 238.5" stroke="#c2c2c2" stroke-width="1.1" fill="none"/><text x="239.5" y="249.5" font-family="Liberation Serif" font-style="italic" font-size="15" fill="#444">fx</text><path d="M1252.5 239.4 L1256.5 243.6 L1260.5 239.4" stroke="#444" stroke-width="1.2" fill="none"/><path d="M97.5 270 v6.3 h-6.8 z" fill="#c8c8c8"/><path d="M1259.1 275 L1262.9 268.4 L1266.6 275 z" fill="#666"/><rect x="1259.3" y="280.2" width="7.6" height="27.4" rx="3.8" fill="#7c7c7c"/><path d="M1259.5 705 L1262.5 709.7 L1265.5 705 z" fill="#666"/><path d="M109.5 724.5 L105 729.5 L109.5 734.5" stroke="#aaa" stroke-width="1.1" fill="none"/><path d="M132 724.5 L136.5 729.5 L132 734.5" stroke="#555" stroke-width="1.1" fill="none"/><circle cx="1027" cy="729.5" r="1.1" fill="#333"/><circle cx="1030.4" cy="729.5" r="1.1" fill="#333"/><circle cx="1033.8" cy="729.5" r="1.1" fill="#333"/><path d="M1053 729.5 h10.3 M1058.2 724.3 v10.4" stroke="#444" stroke-width="1.1"/><circle cx="1086.8" cy="725.5" r="0.9" fill="#444"/><circle cx="1086.8" cy="729.5" r="0.9" fill="#444"/><circle cx="1086.8" cy="733.5" r="0.9" fill="#444"/><path d="M1111 724.6 L1104.8 728.7 L1111 732.7 z" fill="#777"/><rect x="1116" y="724.8" width="108.2" height="8.4" rx="4.2" fill="#7c7c7c"/><path d="M1245.2 724.8 L1251.3 729.2 L1245.2 733.7 z" fill="#777"/></svg>
</body></html>
